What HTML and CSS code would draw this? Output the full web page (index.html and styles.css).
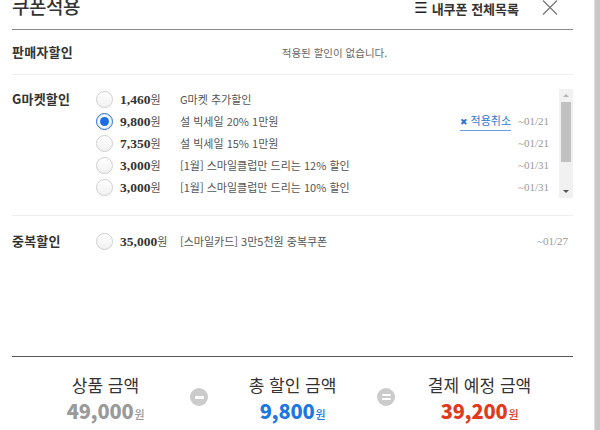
FILE: index.html
```html
<!DOCTYPE html>
<html lang="ko">
<head>
<meta charset="utf-8">
<title>쿠폰적용</title>
<link rel="stylesheet" href="styles.css">
</head>
<body>
<div class="page">
  <div class="main">
    <header class="head">
      <h1 class="title">쿠폰적용</h1>
      <div class="head-right">
        <a class="mylist"><span class="menu-ico">☰</span> 내쿠폰 전체목록</a>
        <span class="close"><svg width="16" height="15" viewBox="0 0 16 15"><path d="M1 0.5 L15 14.5 M15 0.5 L1 14.5" stroke="#777" stroke-width="1.2" fill="none"/></svg></span>
      </div>
    </header>

    <section class="sec sec-seller">
      <h2 class="sec-label">판매자할인</h2>
      <p class="empty">적용된 할인이 없습니다.</p>
    </section>

    <section class="sec sec-gm">
      <h2 class="sec-label">G마켓할인</h2>
      <div class="list-wrap">
        <ul class="list">
          <li class="row"><span class="radio"></span><span class="amt"><b>1,460</b>원</span><span class="desc">G마켓 추가할인</span><span class="date"></span></li>
          <li class="row"><span class="radio on"></span><span class="amt"><b>9,800</b>원</span><span class="desc">설 빅세일 20% 1만원</span><a class="cancel"><span class="cx">✖</span> 적용취소</a><span class="date">~01/21</span></li>
          <li class="row"><span class="radio"></span><span class="amt"><b>7,350</b>원</span><span class="desc">설 빅세일 15% 1만원</span><span class="date">~01/21</span></li>
          <li class="row"><span class="radio"></span><span class="amt"><b>3,000</b>원</span><span class="desc">[1월] 스마일클럽만 드리는 12% 할인</span><span class="date">~01/31</span></li>
          <li class="row"><span class="radio"></span><span class="amt"><b>3,000</b>원</span><span class="desc">[1월] 스마일클럽만 드리는 10% 할인</span><span class="date">~01/31</span></li>
        </ul>
        <div class="vscroll">
          <span class="arr up"></span>
          <span class="track"><span class="thumb"></span></span>
          <span class="arr down"></span>
        </div>
      </div>
    </section>

    <section class="sec sec-dup">
      <h2 class="sec-label">중복할인</h2>
      <ul class="list">
        <li class="row"><span class="radio"></span><span class="amt"><b>35,000</b>원</span><span class="desc">[스마일카드] 3만5천원 중복쿠폰</span><span class="date">~01/27</span></li>
      </ul>
    </section>

    <div class="summary">
      <div class="sum-col">
        <div class="sum-label">상품 금액</div>
        <div class="sum-val gray">49,000<small>원</small></div>
      </div>
      <span class="op minus"></span>
      <div class="sum-col">
        <div class="sum-label">총 할인 금액</div>
        <div class="sum-val blue">9,800<small>원</small></div>
      </div>
      <span class="op equal"></span>
      <div class="sum-col">
        <div class="sum-label">결제 예정 금액</div>
        <div class="sum-val red">39,200<small>원</small></div>
      </div>
    </div>
  </div>
  <div class="page-scroll"></div>
</div>
</body>
</html>
```

FILE: styles.css
```css
* { box-sizing: border-box; }
html, body { margin: 0; padding: 0; }
body {
  width: 600px;
  height: 430px;
  overflow: hidden;
  background: #fff;
  font-family: "Noto Sans CJK KR", "Noto Sans", sans-serif;
  color: #333;
}
ul { list-style: none; margin: 0; padding: 0; }
h1, h2, p { margin: 0; }

.page { display: flex; height: 430px; }
.main { width: 573px; padding-left: 12px; display: flex; flex-direction: column; }
.page-scroll {
  margin-left: auto;
  width: 6px;
  height: 100%;
  background: #c8c8c8;
  border-left: 1px solid #e2e2e2;
}

/* header */
.head {
  height: 30px;
  border-bottom: 1px solid #8a8a8a;
  display: flex;
  justify-content: space-between;
  align-items: flex-start;
}
.title {
  margin-top: -6px;
  font-size: 19px;
  line-height: 24px;
  font-weight: 500;
  color: #333;
  letter-spacing: -0.5px;
}
.head-right { display: flex; align-items: center; gap: 23px; padding-right: 15px; }
.mylist { display: flex; align-items: center; gap: 4px; font-size: 13px; font-weight: 700; color: #333; line-height: 17px; }
.menu-ico { font-family: "DejaVu Sans", sans-serif; font-weight: 400; font-size: 15px; line-height: 17px; color: #222; }
.close { display: flex; margin-top: -2px; }

/* sections */
.sec { display: flex; border-bottom: 1px solid #eee; }
.sec-label { width: 84px; flex: none; font-size: 13px; font-weight: 700; line-height: 22px; color: #333; letter-spacing: 0.2px; }
.sec-seller { height: 45px; align-items: center; }
.sec-seller .empty { flex: 1; text-align: center; font-size: 10.5px; color: #666; }
.sec-gm { padding: 13px 0 17px; }
.sec-dup { padding: 14px 0 104px; border-bottom: 0; }

.list-wrap { flex: 1; display: flex; gap: 5px; }
.list { flex: 1; }
.row { height: 22px; display: flex; align-items: center; padding-right: 5px; }

.radio {
  width: 17px; height: 17px; flex: none;
  border: 1px solid #cfcfcf; border-radius: 50%;
  background: linear-gradient(#fff, #f1f1f1);
  margin-right: 7px;
  display: flex; align-items: center; justify-content: center;
}
.radio.on { border-color: #2f6fd0; background: #fff; box-shadow: inset 0 0 0 1px #d6e4fa; }
.radio.on::after { content: ""; width: 9px; height: 9px; border-radius: 50%; background: #1a6ee8; }

.amt { width: 60px; flex: none; font-size: 11px; color: #555; white-space: nowrap; }
.amt b { font-family: "Liberation Serif", serif; font-size: 13.5px; font-weight: 700; color: #333; }
.desc { flex: 1; font-size: 11px; color: #555; white-space: nowrap; }
.cancel {
  font-size: 11px; color: #2f74d0;
  line-height: 13px; padding-bottom: 1px;
  border-bottom: 1px solid #6b9be0;
  margin-right: 6px; margin-top: 2px;
}
.cx { font-size: 9px; font-family: "DejaVu Sans", sans-serif; }
.date { width: 32px; flex: none; text-align: right; font-family: "Liberation Serif", serif; font-size: 11px; color: #999; }

/* inner scrollbar */
.vscroll {
  width: 14px; flex: none;
  margin-top: 1px; height: 109px;
  background: #f1f1f1;
  display: flex; flex-direction: column; align-items: center;
}
.arr { height: 13px; width: 100%; display: flex; align-items: center; justify-content: center; flex: none; }
.arr::before { content: ""; border-left: 3px solid transparent; border-right: 3px solid transparent; }
.arr.up::before { border-bottom: 3px solid #b5b5b5; }
.arr.down::before { border-top: 3px solid #555; }
.track { flex: 1; width: 100%; display: flex; justify-content: center; }
.thumb { width: 10px; height: 60px; background: #c1c1c1; }

/* summary */
.summary {
  border-top: 1px solid #555;
  padding-top: 17px;
  display: flex;
  align-items: flex-start;
}
.sum-col { flex: 1; display: flex; flex-direction: column; align-items: center; }
.sum-label { font-size: 17px; line-height: 22px; color: #333; }
.sum-val { font-size: 20px; font-weight: 900; line-height: 26px; margin-top: 2px; letter-spacing: -0.2px; }
.sum-val small { font-size: 11px; font-weight: 500; margin-left: 1px; }
.gray { color: #9a9a9a; }
.blue { color: #1c78e0; }
.red { color: #e0391e; }

.op {
  width: 18px; height: 18px; border-radius: 50%; background: #cbcbcb; flex: none;
  margin: 14px -9px 0; position: relative; z-index: 1;
  display: flex; flex-direction: column; align-items: center; justify-content: center; gap: 2px;
}
.op.minus::before { content: ""; width: 9px; height: 3px; border-radius: 1px; background: #fff; }
.op.equal::before, .op.equal::after { content: ""; width: 9px; height: 2px; border-radius: 1px; background: #fff; }
```
